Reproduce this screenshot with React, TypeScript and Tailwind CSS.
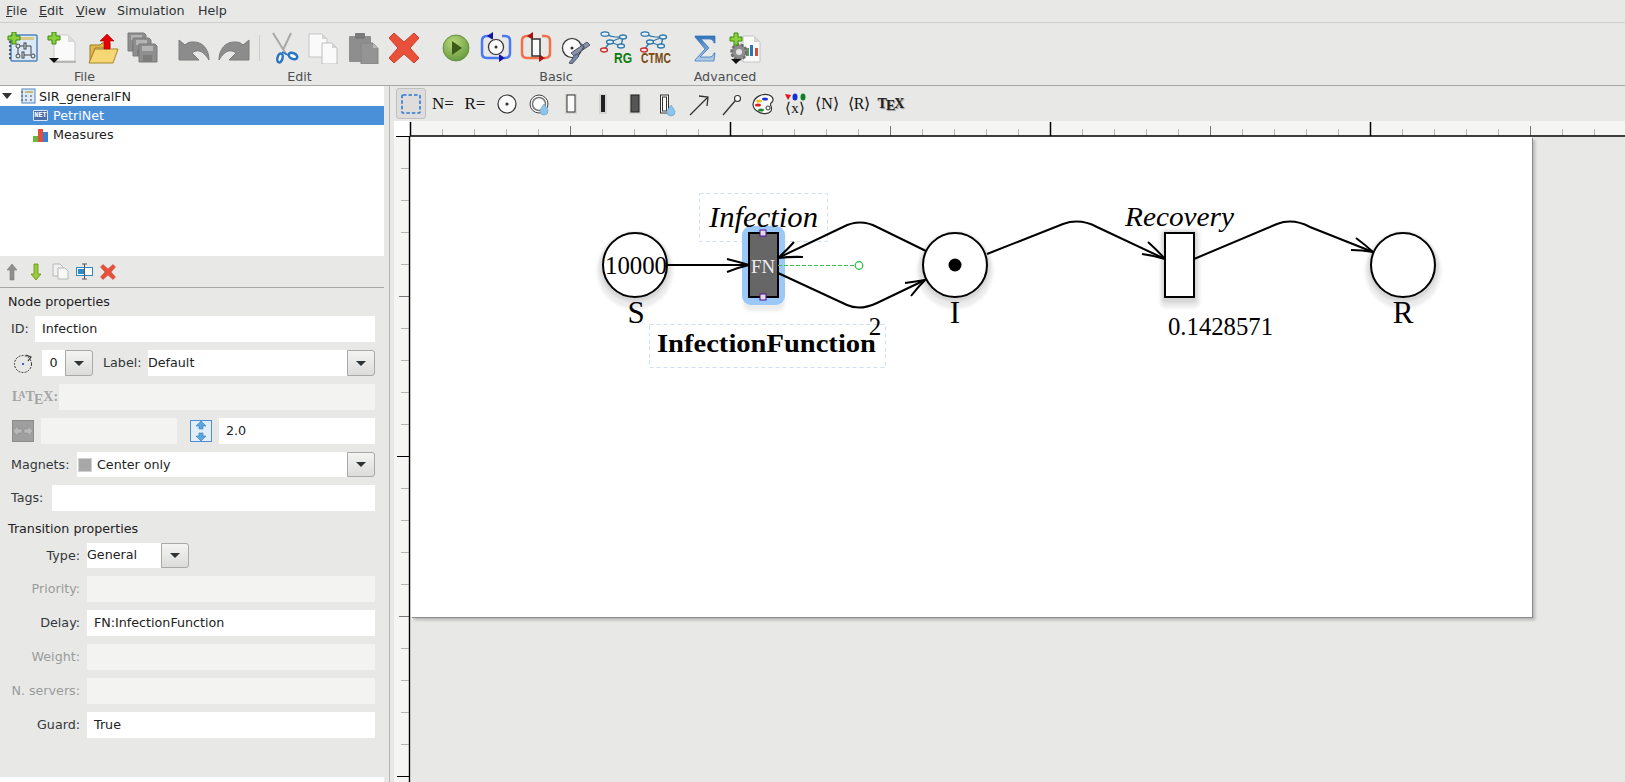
import React from 'react'

const SVG = ({ s = 32, children }: { s?: number; children: React.ReactNode }) => (
  <svg width={s} height={s} viewBox={`0 0 ${s} ${s}`} className="block">
    {children}
  </svg>
)

const Plus = ({ x = 0, y = 0 }: { x?: number; y?: number }) => (
  <path
    transform={`translate(${x} ${y})`}
    d="M4 0h4v4h4v4H8v4H4V8H0V4h4z"
    fill="#8ad13c"
    stroke="#3f8a12"
    strokeWidth="1"
  />
)

const Caret = ({ x, y }: { x: number; y: number }) => <path d={`M${x} ${y}h10l-5 5z`} fill="#111" />

const NewProject = () => (
  <SVG>
    <rect x="4" y="3" width="26" height="26" rx="1" fill="#dbe8f6" stroke="#4f86bd" strokeWidth="1.5" />
    <rect x="13" y="5" width="14" height="3" fill="#d8c98a" />
    <path d="M4 10h-2M4 14h-2M4 18h-2M4 22h-2M4 26h-2" stroke="#333" strokeWidth="1.5" />
    <g fill="none" stroke="#444" strokeWidth="1">
      <circle cx="11" cy="14" r="2" />
      <circle cx="26" cy="24" r="2" />
      <circle cx="11" cy="24" r="2" />
      <rect x="17" y="11" width="2" height="6" />
      <rect x="15" y="20" width="2" height="6" />
      <path d="M13 14h4M19 14h5v8M17 23h7M11 16v6" />
    </g>
    <Plus x={1} y={0} />
  </SVG>
)

const NewFile = () => (
  <SVG>
    <path d="M7 3h14l7 7v19H7z" fill="#fafafa" stroke="#c9c9c9" />
    <path d="M21 3v7h7z" fill="#dcdcdc" />
    <path d="M8 30h21" stroke="#aaa" strokeWidth="1.5" />
    <Plus x={1} y={0} />
    <Caret x={2} y={26} />
  </SVG>
)

const OpenFolder = () => (
  <SVG>
    <path d="M3 13h10l2-2h8v5H8L3 30z" fill="#e0b94e" stroke="#9c7a22" />
    <path d="M8 17h23l-5 14H2z" fill="#f7d774" stroke="#a8842a" />
    <path d="M20 2l7 7h-4v8h-6V9h-4z" fill="#e60000" stroke="#b00000" strokeWidth=".6" />
  </SVG>
)

const Disk = ({ x, y }: { x: number; y: number }) => (
  <g transform={`translate(${x} ${y})`}>
    <path d="M0 0h16l2 2v16H0z" fill="#8e8e8e" stroke="#7a7a7a" />
    <rect x="3" y="2" width="11" height="5" fill="#b4b4b4" />
    <rect x="4" y="11" width="9" height="7" fill="#7c7c7c" />
  </g>
)

const SaveAll = () => (
  <SVG>
    <Disk x={1} y={1} />
    <Disk x={6} y={6} />
    <Disk x={12} y={12} />
  </SVG>
)

const Undo = () => (
  <SVG>
    <path d="M1 8v20h20l-7-7c5-4 11-3 17 7 0-10-6-19-17-18-3 0-5 1-7 3z" fill="#8c8c8c" stroke="#7c7c7c" />
  </SVG>
)

const Redo = () => (
  <SVG>
    <path d="M31 8v20H11l7-7c-5-4-11-3-17 7 0-10 6-19 17-18 3 0 5 1 7 3z" fill="#8c8c8c" stroke="#7c7c7c" />
  </SVG>
)

const Scissors = () => (
  <SVG>
    <path d="M5 1l13 21M23 1l-8 17" stroke="#a8a8a8" strokeWidth="2" fill="none" />
    <ellipse cx="12" cy="26" rx="2.5" ry="4.5" transform="rotate(15 12 26)" fill="#fff" stroke="#2a74c4" strokeWidth="2.5" />
    <ellipse cx="25" cy="24" rx="4.5" ry="2.8" transform="rotate(25 25 24)" fill="#fff" stroke="#2a74c4" strokeWidth="2.5" />
    <path d="M14 20l6 3" stroke="#2a74c4" strokeWidth="1.5" />
  </SVG>
)

const Copy = () => (
  <SVG>
    <path d="M1 2h13l5 5v18H1z" fill="#fafafa" stroke="#c4c4c4" />
    <path d="M14 2v5h5z" fill="#d4d4d4" />
    <path d="M14 11h10l5 5v16H14z" fill="#fafafa" stroke="#bdbdbd" />
    <path d="M24 11v5h5z" fill="#d4d4d4" />
  </SVG>
)

const Paste = () => (
  <SVG>
    <rect x="1" y="4" width="22" height="26" rx="1" fill="#8e8e8e" />
    <rect x="7" y="1" width="10" height="6" rx="1" fill="#7a7a7a" />
    <path d="M13 11h12l5 5v16H13z" fill="#949494" stroke="#868686" />
    <path d="M25 11v5h5z" fill="#b8b8b8" />
  </SVG>
)

const RedX = ({ s = 32 }: { s?: number }) => (
  <svg width={s} height={s} viewBox="0 0 32 32" className="block">
    <path
      d="M6 1l10 9 10-9 5 5-9 10 9 10-5 5-10-9-10 9-5-5 9-10-9-10z"
      fill="#e8503a"
      stroke="#c9412c"
      strokeWidth="1"
    />
  </svg>
)

const Play = () => (
  <SVG>
    <defs>
      <radialGradient id="pl" cx=".4" cy=".3" r=".8">
        <stop offset="0" stopColor="#b7d97c" />
        <stop offset="1" stopColor="#5e9434" />
      </radialGradient>
    </defs>
    <circle cx="16" cy="16" r="13" fill="url(#pl)" stroke="#6b8f4a" />
    <path d="M12 9l10 7-10 7z" fill="#3b5a1c" />
  </SVG>
)

const PlaceThin = ({ cx, cy, r }: { cx: number; cy: number; r: number }) => (
  <g>
    <circle cx={cx} cy={cy} r={r + 1} fill="#cfcfcf" />
    <circle cx={cx} cy={cy} r={r} fill="#fafafa" stroke="#333" strokeWidth="1.2" />
    <circle cx={cx} cy={cy} r="1.5" fill="#333" />
  </g>
)

const Unfold = ({ c, tip, children }: { c: string; tip: string; children: React.ReactNode }) => (
  <SVG>
    <path d="M10 4h-3q-5 0-5 5v12q0 5 5 5h15M22 4h3q5 0 5 5v12q0 5-5 5h-1" fill="none" stroke={c} strokeWidth="2.5" />
    <path d="M7 4l6-4v8zM25 26l-6-4v8z" fill={tip} />
    {children}
  </SVG>
)

const Measure = () => (
  <SVG>
    <PlaceThin cx={12} cy={16} r={9.5} />
    <path d="M27 10l3 3-16 11-3-3z" fill="#8a94a6" stroke="#4d566a" />
    <path d="M9 31l7-9 3 2-7 8z" fill="#7b8aa8" stroke="#4d566a" />
    <path d="M20 11l4 4-2 3" fill="none" stroke="#4d566a" strokeWidth="1.5" />
  </SVG>
)

const Graph = ({ children }: { children: React.ReactNode }) => (
  <svg width="36" height="36" viewBox="0 0 36 36" className="block">
    <g fill="none" stroke="#2f78a8" strokeWidth="1.3">
      <path d="M7 4Q15 8 25 7M25 7L12 12M12 12L23 16M25 7L23 16M12 12L6 20" />
      <ellipse cx="7" cy="4" rx="4" ry="2.2" fill="#e4eff8" />
      <ellipse cx="25" cy="7" rx="3.5" ry="2" fill="#e4eff8" />
      <ellipse cx="12" cy="12" rx="3.5" ry="2" fill="#e4eff8" />
      <ellipse cx="23" cy="16" rx="3.5" ry="2" fill="#e4eff8" />
      <ellipse cx="6" cy="20" rx="3.5" ry="2" stroke="#c62f2f" fill="#fbe3e3" />
    </g>
    {children}
  </svg>
)

const Sigma = () => (
  <SVG>
    <defs>
      <linearGradient id="sg" x1="0" y1="0" x2="0" y2="1">
        <stop offset="0" stopColor="#2f73b8" />
        <stop offset="1" stopColor="#b9d0ea" />
      </linearGradient>
    </defs>
    <path d="M6 4h20v7l-1 0c-1-3-2-4-5-4h-8l8 9-9 9h9c3 0 4-1 5-4h1l-1 8H6v-1l10-11L6 5z" fill="url(#sg)" stroke="#2f73b8" strokeWidth=".7" />
  </SVG>
)

const AdvChart = () => (
  <SVG>
    <path d="M14 4h11l6 6v20H14z" fill="#fafafa" stroke="#c4c4c4" />
    <path d="M25 4v6h6z" fill="#d4d4d4" />
    <rect x="17" y="16" width="3" height="8" fill="#5aa05a" />
    <rect x="21" y="13" width="3" height="11" fill="#2f73b8" />
    <rect x="26" y="16" width="3" height="8" fill="#d0503c" />
    <circle cx="10" cy="20" r="7.5" fill="#8d8d8d" stroke="#6e6e6e" strokeWidth="2.5" strokeDasharray="3 1.6" />
    <circle cx="10" cy="20" r="3" fill="#e4e4e4" />
    <Plus x={1} y={1} />
    <Caret x={2} y={27} />
  </SVG>
)

const ToolBtn = ({ children }: { children: React.ReactNode }) => (
  <div className="w-10 h-9 flex items-center justify-center shrink-0">{children}</div>
)

const Group = ({ label, className, children }: { label: string; className: string; children: React.ReactNode }) => (
  <div className={`flex flex-col shrink-0 ${className}`}>
    <div className="flex h-[36px] items-center">{children}</div>
    <div className="text-center text-[12.7px] leading-[16px] mt-[3px] text-[#4a4f50]">{label}</div>
  </div>
)

const MainToolbar = () => (
  <div className="flex h-[55px] pt-[7px] border-b border-[#a6a6a5] box-content shrink-0">
    <Group label="File" className="w-[166px] pl-[3px]">
      <ToolBtn><NewProject /></ToolBtn>
      <ToolBtn><NewFile /></ToolBtn>
      <ToolBtn><OpenFolder /></ToolBtn>
      <ToolBtn><SaveAll /></ToolBtn>
    </Group>
    <Group label="Edit" className="w-[251px] ml-2">
      <ToolBtn><Undo /></ToolBtn>
      <ToolBtn><Redo /></ToolBtn>
      <div className="w-[10px] flex justify-center"><div className="w-px h-[26px] bg-[#cfcfcd]" /></div>
      <ToolBtn><Scissors /></ToolBtn>
      <ToolBtn><Copy /></ToolBtn>
      <ToolBtn><Paste /></ToolBtn>
      <ToolBtn><RedX /></ToolBtn>
    </Group>
    <Group label="Basic" className="w-[240px] ml-[11px]">
      <ToolBtn><Play /></ToolBtn>
      <ToolBtn>
        <Unfold c="#4a78f0" tip="#1414a8"><PlaceThin cx={16} cy={15} r={7.5} /></Unfold>
      </ToolBtn>
      <ToolBtn>
        <Unfold c="#f0704a" tip="#a81414">
          <rect x="12" y="7" width="8" height="17" fill="#fafafa" stroke="#333" strokeWidth="1.5" />
        </Unfold>
      </ToolBtn>
      <ToolBtn><Measure /></ToolBtn>
      <ToolBtn>
        <Graph>
          <text transform="translate(16 33) scale(.86 1)" fontFamily="'Liberation Sans',sans-serif" fontWeight="700" fontSize="14" fill="#0d7a0d">RG</text>
        </Graph>
      </ToolBtn>
      <ToolBtn>
        <Graph>
          <text transform="translate(3 33) scale(.74 1)" fontFamily="'Liberation Sans',sans-serif" fontWeight="700" fontSize="14" fill="#7a4a10">CTMC</text>
        </Graph>
      </ToolBtn>
    </Group>
    <Group label="Advanced" className="w-[80px] ml-[9px] whitespace-nowrap">
      <ToolBtn><Sigma /></ToolBtn>
      <ToolBtn><AdvChart /></ToolBtn>
    </Group>
  </div>
)

const Tree = () => (
  <div className="h-[170px] bg-white text-[12.7px] leading-[19px] text-[#1d1d1d] shrink-0">
    <div className="h-5 flex items-center">
      <svg width="20" height="20" className="shrink-0"><path d="M2 7h10l-5 6z" fill="#333" /></svg>
      <svg width="16" height="16" className="shrink-0">
        <rect x="2" y="1" width="13" height="14" fill="#dce9f7" stroke="#4f86bd" />
        <rect x="5" y="3" width="8" height="2" fill="#c9b877" />
        <path d="M5 8h2M10 8h2M5 12h2M10 12h2M1 4h2M1 8h2M1 12h2" stroke="#444" />
      </svg>
      <span className="ml-[3px]">SIR_generalFN</span>
    </div>
    <div className="h-[19px] flex items-center bg-[#4a90d9] text-white pl-[33px]">
      <span className="w-[15px] h-[11px] rounded-[1px] bg-[#4a6fa8] border border-[#dce6f3] text-[7px] leading-[9px] font-bold text-center font-['Liberation_Mono'] text-white overflow-hidden">NET</span>
      <span className="ml-[5px]">PetriNet</span>
    </div>
    <div className="h-[19px] flex items-center pl-[33px]">
      <svg width="16" height="16" className="shrink-0">
        <rect x="0" y="9" width="5" height="6" fill="#6cb83a" />
        <rect x="5" y="2" width="5" height="13" fill="#e0503a" />
        <rect x="10" y="5" width="5" height="10" fill="#3a80d0" />
      </svg>
      <span className="ml-[4px]">Measures</span>
    </div>
  </div>
)

const ListToolbar = () => (
  <div className="flex items-center h-[31px] border-b border-[#a6a6a5] box-content shrink-0">
    <div className="w-6 flex justify-center">
      <svg width="14" height="18"><path d="M7 1l5 6H9v10H5V7H2z" fill="#8f8f8f" stroke="#808080" strokeWidth=".6" /></svg>
    </div>
    <div className="w-6 flex justify-center">
      <svg width="14" height="18"><path d="M7 17l5-6H9V1H5v10H2z" fill="#9bcb3c" stroke="#5f8f12" strokeWidth=".8" /></svg>
    </div>
    <div className="w-6 flex justify-center">
      <svg width="17" height="17">
        <path d="M1 1h7l3 3v9H1z" fill="#f0f0f0" stroke="#b8b8b8" />
        <path d="M6 5h7l3 3v8H6z" fill="#f8f8f8" stroke="#b8b8b8" />
      </svg>
    </div>
    <div className="w-6 flex justify-center">
      <svg width="17" height="17">
        <rect x="0.5" y="4.5" width="16" height="8" fill="#fff" stroke="#2f8ac4" />
        <rect x="2" y="6" width="6" height="5" fill="#2f8ac4" />
        <path d="M6 1h5M8.5 1v15M6 16h5" stroke="#555" fill="none" />
      </svg>
    </div>
    <div className="w-6 flex justify-center"><RedX s={16} /></div>
  </div>
)

const Input = ({ value, className = '', disabled, h = 'h-[26px]' }: { value?: string; className?: string; disabled?: boolean; h?: string }) => (
  <div className={`flex items-center leading-none ${h} ${disabled ? 'bg-[#f3f3f2]' : 'bg-white'} ${className}`}>
    {value}
  </div>
)

const DropBtn = ({ h = 'h-[26px]' }: { h?: string }) => (
  <div className={`w-[28px] flex items-center justify-center rounded-r-[3px] border border-[#a9a9a7] bg-gradient-to-b from-[#f4f4f3] to-[#dcdcda] shrink-0 ${h}`}>
    <svg width="10" height="5"><path d="M0 0h10L5 5z" fill="#2e3436" /></svg>
  </div>
)

const TransRow = ({ label, value }: { label: string; value?: string }) => (
  <div className="flex items-center h-[26px]">
    <span className={`w-[80px] text-right ${value ? 'text-[#33383a]' : 'text-[#9a9c9c]'}`}>{label}</span>
    <Input value={value} disabled={!value} className="ml-[7px] flex-1 pl-[7px] text-[#222]" />
  </div>
)

const Properties = () => (
  <div className="flex-1 min-h-0 pr-[9px] text-[12.7px] text-[#33383a]">
    <div className="pl-2 h-[28px] flex items-center text-[#222]">Node properties</div>
    <div className="flex flex-col gap-2">
      <div className="flex items-center pl-[11px]">
        <span className="w-[24px]">ID:</span>
        <Input value="Infection" className="flex-1 pl-[7px] text-[#222]" />
      </div>
      <div className="flex items-center pl-[13px]">
        <svg width="20" height="22" className="shrink-0">
          <circle cx="10" cy="12" r="8.5" fill="none" stroke="#333" strokeDasharray="2 1.2" />
          <path d="M13 3l5 2-3 4" fill="none" stroke="#333" strokeWidth="1.2" />
          <circle cx="10" cy="12" r="1" fill="#2030a0" />
        </svg>
        <Input value="0" className="ml-[9px] w-[23px] justify-center text-[#222]" />
        <DropBtn />
        <span className="ml-[10px] w-[45px]">Label:</span>
        <Input value="Default" className="flex-1 text-[#222]" />
        <DropBtn />
      </div>
      <div className="flex items-center pl-[12px]">
        <span className="w-[47px] [font-family:'Liberation_Serif',serif] text-[14px] text-[#a5a5a5] font-bold whitespace-nowrap leading-none">
          L<span className="text-[10px] relative -top-[3px] -ml-[3px]">A</span>T<span className="relative top-[3px] -ml-[1px]">E</span>X:
        </span>
        <Input disabled className="flex-1" />
      </div>
      <div className="flex items-center pl-[12px]">
        <div className="w-[22px] h-[22px] bg-[#9f9f9f] border border-[#8c8c8c] flex items-center justify-center">
          <svg width="20" height="12"><path d="M0 6l5-5v3h4v4H5v3zM20 6l-5-5v3h-4v4h4v3z" fill="#b9b9b9" stroke="#8a8a8a" strokeWidth=".5" /></svg>
        </div>
        <Input disabled className="ml-[7px] w-[136px]" />
        <div className="ml-[13px] w-[22px] h-[22px] bg-[#e4edf5] border border-[#4a90d9] flex items-center justify-center">
          <svg width="12" height="20"><path d="M6 0l5 5H8v3H4V5H1zM6 20l-5-5h3v-3h4v3h3z" fill="#5aa6e0" stroke="#2f7fbf" strokeWidth=".6" /></svg>
        </div>
        <Input value="2.0" className="ml-[7px] flex-1 pl-[7px] text-[#222]" />
      </div>
      <div className="flex items-center pl-[11px]">
        <span className="w-[66px]">Magnets:</span>
        <div className="flex-1 h-[25px] flex items-center bg-white text-[#222]">
          <span className="w-[14px] h-[14px] ml-[1px] border border-[#d0d0d0] bg-[#a8a8a8] shrink-0" />
          <span className="ml-[5px]">Center only</span>
        </div>
        <DropBtn h="h-[25px]" />
      </div>
      <div className="flex items-center pl-[11px]">
        <span className="w-[41px]">Tags:</span>
        <Input className="flex-1" />
      </div>
    </div>
    <div className="pl-2 pt-[3px] h-[32px] flex items-center text-[#222]">Transition properties</div>
    <div className="flex flex-col gap-2">
      <div className="flex items-center h-[25px]">
        <span className="w-[80px] text-right">Type:</span>
        <Input value="General" h="h-[25px]" className="ml-[7px] w-[74px] text-[#222]" />
        <DropBtn h="h-[25px]" />
      </div>
      <TransRow label="Priority:" />
      <TransRow label="Delay:" value="FN:InfectionFunction" />
      <TransRow label="Weight:" />
      <TransRow label="N. servers:" />
      <TransRow label="Guard:" value="True" />
    </div>
  </div>
)

const serif = "'Liberation Serif',serif"

const Small = ({ children }: { children: React.ReactNode }) => (
  <svg width="24" height="28" viewBox="0 0 24 28" className="block">{children}</svg>
)

const Tex = ({ l, c = 17 }: { l: string; c?: number }) => (
  <span className="[font-family:'Liberation_Serif',serif] text-[#111] whitespace-nowrap" style={{ fontSize: c }}>{l}</span>
)

const Drop = ({ x, y }: { x: number; y: number }) => (
  <path d={`M${x} ${y}c2 3 4 5 4 7a4 4 0 0 1-8 0c0-2 2-4 4-7z`} fill="#8ec4ea" stroke="#5d9fd0" strokeWidth=".6" />
)

const NetToolbar = () => {
  const items: React.ReactNode[] = [
    <Tex l="N=" />,
    <Tex l="R=" />,
    <Small>
      <circle cx="12" cy="14" r="9" fill="#fafafa" stroke="#333" strokeWidth="1.2" />
      <circle cx="12" cy="14" r="1.6" fill="#333" />
    </Small>,
    <Small>
      <circle cx="12" cy="14" r="9" fill="#fafafa" stroke="#444" strokeWidth="1" />
      <circle cx="12" cy="14" r="6.5" fill="#fff" stroke="#777" strokeWidth="1.5" />
      <Drop x={17} y={14} />
    </Small>,
    <Small>
      <rect x="6" y="4" width="12" height="20" fill="#d6d6d6" />
      <rect x="8" y="5" width="8" height="17" fill="#fafafa" stroke="#333" strokeWidth="1" />
    </Small>,
    <Small>
      <rect x="8" y="4" width="8" height="20" fill="#d6d6d6" />
      <rect x="10" y="5" width="4" height="17" fill="#222" />
    </Small>,
    <Small>
      <rect x="6" y="4" width="12" height="20" fill="#d6d6d6" />
      <rect x="8" y="5" width="8" height="17" fill="#555" stroke="#222" />
    </Small>,
    <Small>
      <rect x="5.5" y="5" width="8" height="18" fill="#fff" stroke="#333" />
      <rect x="7.5" y="7" width="4" height="14" fill="#fff" stroke="#333" />
      <Drop x={16} y={15} />
    </Small>,
    <Small>
      <path d="M3 25L21 7M12 6l9 1-1 9" fill="none" stroke="#333" strokeWidth="1.3" />
    </Small>,
    <Small>
      <path d="M4 25L16 11" fill="none" stroke="#333" strokeWidth="1.3" />
      <circle cx="18.5" cy="8.5" r="3" fill="#fff" stroke="#333" strokeWidth="1.1" />
    </Small>,
    <Small>
      <path d="M2 14C3 7 11 3 18 5c5 2 5 6 2 8-2 2 2 4 0 8-3 4-10 3-14 0-3-2-4-4-4-7z" fill="#fafafa" stroke="#333" strokeWidth="1.2" />
      <ellipse cx="14" cy="9" rx="3" ry="1.6" fill="#2030e0" />
      <ellipse cx="8" cy="11" rx="3" ry="1.6" fill="#f0c020" />
      <ellipse cx="7" cy="15" rx="3" ry="1.6" fill="#e02020" />
      <ellipse cx="10" cy="20" rx="3" ry="1.6" fill="#1f8a2f" />
      <circle cx="17" cy="18" r="2" fill="#fff" stroke="#333" />
    </Small>,
    <div className="relative w-6 h-7 flex justify-center">
      <svg width="24" height="10" className="absolute top-[2px] left-0">
        <path d="M2 2l6 1-3 5z" fill="#e81010" />
        <ellipse cx="12" cy="5" rx="2.5" ry="3.6" fill="#1030e0" />
        <ellipse cx="20" cy="5" rx="2.5" ry="3.6" fill="#108020" />
      </svg>
      <span className="absolute top-[9px] [font-family:'Liberation_Serif',serif] text-[15px] leading-[18px] text-[#111]">⟨x⟩</span>
    </div>,
    <Tex l="⟨N⟩" c={16} />,
    <Tex l="⟨R⟩" c={16} />,
    <span className="[font-family:'Liberation_Serif',serif] text-[14px] font-bold text-[#222] whitespace-nowrap leading-none [text-shadow:1px_1px_1px_#999]">
      T<span className="relative top-[2px] -ml-[1px]">E</span><span className="-ml-[1px]">X</span>
    </span>,
  ]
  return (
    <div className="h-[35px] flex items-start pl-[2px] pt-[2px] shrink-0">
      <div className="w-[30px] h-[31px] mr-px rounded-[3px] border border-[#c0c0be] bg-[#dedddb] flex items-center justify-center shrink-0">
        <svg width="20" height="20">
          <rect x="1" y="1" width="18" height="18" rx="1" fill="none" stroke="#2a78d8" strokeWidth="1.6" strokeDasharray="3.5 2" />
        </svg>
      </div>
      {items.map((it, i) => (
        <div key={i} className="w-8 h-[31px] flex items-center justify-center shrink-0">{it}</div>
      ))}
    </div>
  )
}

const HRuler = () => {
  const ticks = Array.from({ length: 40 }, (_, i) => i)
  return (
    <svg width="1231" height="16" className="block shrink-0">
      <rect width="1231" height="16" fill="#f5f5f4" />
      <rect width="16" height="16" fill="#fff" />
      {ticks.map(i => {
        const x = 16 + i * 32 + 0.5
        const major = i % 10 === 0
        const mid = i % 5 === 0
        return (
          <line
            key={i}
            x1={x}
            x2={x}
            y1={major ? 1 : mid ? 5 : 8}
            y2={15}
            strokeWidth={major ? 1.5 : 1}
            stroke={major ? '#000' : mid ? '#777' : '#b4b4b4'}
          />
        )
      })}
      <line x1="16" x2="1231" y1="15" y2="15" stroke="#000" strokeWidth="1.6" />
      <line x1="2" x2="16" y1="15.5" y2="15.5" stroke="#000" />
    </svg>
  )
}

const VRuler = () => {
  const ticks = Array.from({ length: 20 }, (_, i) => i + 1)
  return (
    <svg width="17" height="645" className="block shrink-0">
      <rect width="17" height="645" fill="#f5f5f4" />
      {ticks.map(i => {
        const y = i * 32 - 0.5
        const major = i % 10 === 0
        const mid = i % 5 === 0
        return (
          <line
            key={i}
            y1={y}
            y2={y}
            x1={major ? 3 : mid ? 5 : 7}
            x2={16}
            stroke={major ? '#000' : mid ? '#777' : '#b4b4b4'}
          />
        )
      })}
      <line x1="15.5" x2="15.5" y1="0" y2="645" stroke="#000" strokeWidth="1.4" />
    </svg>
  )
}

const Barb = ({ tip, a, b }: { tip: [number, number]; a: [number, number]; b: [number, number] }) => (
  <path
    d={`M${a[0]} ${a[1]}Q${(a[0] + tip[0]) / 2 + 1} ${(a[1] + tip[1]) / 2} ${tip[0]} ${tip[1]}Q${(b[0] + tip[0]) / 2} ${(b[1] + tip[1]) / 2 - 1} ${b[0]} ${b[1]}`}
    fill="none"
    stroke="#000"
    strokeWidth="2"
  />
)

const Shadow = ({ cx, cy }: { cx: number; cy: number }) => (
  <g filter="url(#soft)">
    <circle cx={cx} cy={cy + 6} r="38" fill="#ececec" />
    <circle cx={cx} cy={cy + 2} r="35" fill="#d6d6d6" />
  </g>
)

const PetriCanvas = () => (
  <svg width="1121" height="480" viewBox="411 137 1121 480" className="block">
    <defs>
      <filter id="soft" x="-20%" y="-20%" width="140%" height="140%">
        <feGaussianBlur stdDeviation="1.6" />
      </filter>
    </defs>
    <rect x="699.5" y="193.5" width="128" height="48" fill="none" stroke="#cfe0f5" strokeDasharray="4 3" />
    <rect x="649.5" y="324.5" width="236" height="43" fill="none" stroke="#cfe0f5" strokeDasharray="4 3" />

    <Shadow cx={635} cy={265} />
    <Shadow cx={955} cy={265} />
    <Shadow cx={1403} cy={265} />
    <g filter="url(#soft)">
      <rect x="1160" y="229" width="40" height="79" rx="6" fill="#ececec" />
      <rect x="1162" y="231" width="35" height="72" rx="3" fill="#d6d6d6" />
    </g>
    <rect x="743" y="228" width="42" height="83" rx="8" fill="#ececec" filter="url(#soft)" />

    <rect x="742" y="226" width="43" height="79" rx="9" fill="#99c8f9" />

    <g fill="none" stroke="#000" strokeWidth="2">
      <path d="M667 265H749" />
      <path d="M778 273L847 305Q860 311 877 303L925 280" />
      <path d="M926 251L877 227Q860 218 843 227L778 258" />
      <path d="M987 254L1063 224Q1080 218 1097 227L1165 259" />
      <path d="M1194 259L1277 224Q1293 218 1310 227L1373 252" />
    </g>
    <Barb tip={[749, 265]} a={[727, 259]} b={[727, 272]} />
    <Barb tip={[778, 258]} a={[794, 242]} b={[803, 257]} />
    <Barb tip={[925, 280]} a={[905, 283]} b={[911, 296]} />
    <Barb tip={[1165, 259]} a={[1148, 242]} b={[1142, 254]} />
    <Barb tip={[1373, 252]} a={[1356, 238]} b={[1351, 250]} />

    <circle cx="635" cy="265" r="32" fill="#fff" stroke="#000" strokeWidth="2" />
    <circle cx="955" cy="265" r="32" fill="#fff" stroke="#000" strokeWidth="2" />
    <circle cx="955" cy="265" r="6.5" fill="#000" />
    <circle cx="1403" cy="265" r="32" fill="#fff" stroke="#000" strokeWidth="2" />
    <rect x="749" y="233" width="29" height="64" fill="#666" stroke="#000" strokeWidth="2" />
    <rect x="1165" y="233" width="29" height="64" fill="#fff" stroke="#000" strokeWidth="2" />

    <path d="M778 265.5H855" stroke="#3dbb55" strokeDasharray="4 2" />
    <circle cx="859" cy="265.5" r="3.8" fill="#fff" stroke="#22b83a" strokeWidth="1.2" />
    <rect x="760" y="230" width="6" height="6" fill="#ddd" stroke="#5a0a9e" />
    <rect x="760" y="294" width="6" height="6" fill="#ddd" stroke="#5a0a9e" />

    <g fontFamily={serif} fill="#000">
      <text x="605" y="274" fontSize="26" textLength="62" lengthAdjust="spacingAndGlyphs">10000</text>
      <text x="636" y="323" fontSize="31" textAnchor="middle">S</text>
      <text x="955" y="323" fontSize="31" textAnchor="middle">I</text>
      <text x="1403" y="323" fontSize="31" textAnchor="middle">R</text>
      <text x="709" y="227" fontSize="29" fontStyle="italic" textLength="109" lengthAdjust="spacingAndGlyphs">Infection</text>
      <text x="1125" y="226" fontSize="28" fontStyle="italic" textLength="109" lengthAdjust="spacingAndGlyphs">Recovery</text>
      <text x="657" y="352" fontSize="25" fontWeight="700" textLength="219" lengthAdjust="spacingAndGlyphs">InfectionFunction</text>
      <text x="875" y="335" fontSize="25" textAnchor="middle">2</text>
      <text x="1168" y="335" fontSize="25" textLength="105" lengthAdjust="spacingAndGlyphs">0.1428571</text>
      <text x="751" y="273" fontSize="19" fill="#eee" textLength="24" lengthAdjust="spacingAndGlyphs">FN</text>
    </g>
  </svg>
)

export default function App() {
  return (
    <div className="w-[1625px] h-[782px] overflow-hidden bg-[#e8e8e7] flex flex-col [font-family:'DejaVu_Sans',sans-serif] text-[12.7px] text-[#2e3436]">
      <div className="h-[22px] flex items-center pl-[6px] border-b border-[#cfcfcd] box-content shrink-0">
        <span className="w-[33px]"><u>F</u>ile</span>
        <span className="w-[37px]"><u>E</u>dit</span>
        <span className="w-[41px]"><u>V</u>iew</span>
        <span className="w-[81px]">Simulation</span>
        <span>Help</span>
      </div>
      <MainToolbar />
      <div className="flex flex-1 min-h-0">
        <div className="w-[384px] shrink-0 flex flex-col">
          <Tree />
          <ListToolbar />
          <Properties />
          <div className="h-[5px] bg-white shrink-0" />
        </div>
        <div className="w-[10px] shrink-0 flex justify-center"><div className="w-px bg-[#b4b4b2]" /></div>
        <div className="flex-1 min-w-0 flex flex-col">
          <NetToolbar />
          <div className="h-[16px] shrink-0"><HRuler /></div>
          <div className="flex flex-1 min-h-0">
            <VRuler />
            <div className="flex-1 min-w-0 bg-[#e8e8e7]">
              <div className="w-fit bg-white shadow-[1px_1px_0_#8a8a8a,3px_3px_3px_#b4b4b4]"><PetriCanvas /></div>
            </div>
          </div>
        </div>
      </div>
    </div>
  )
}
